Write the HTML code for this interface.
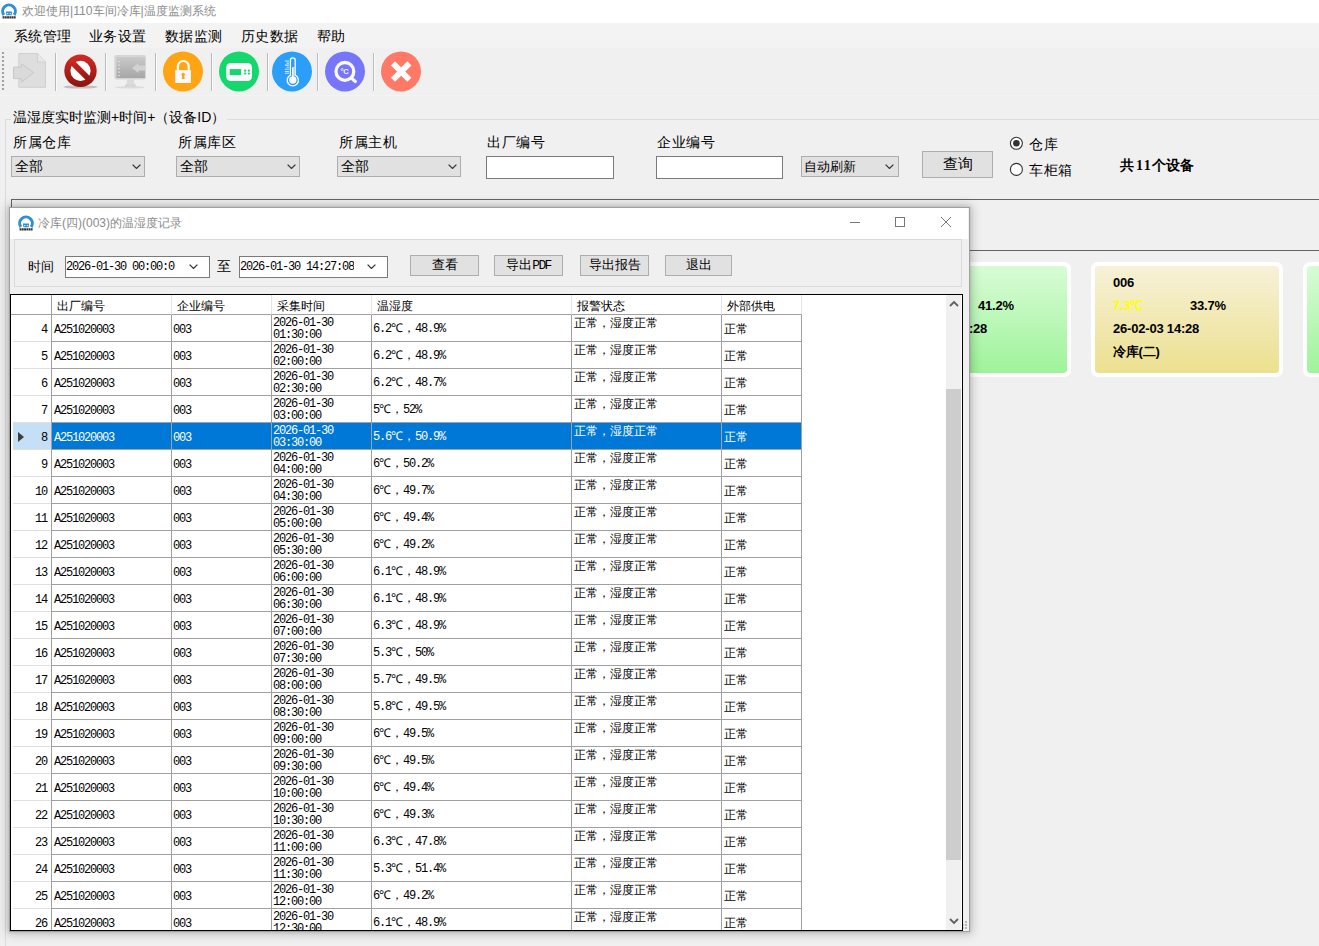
<!DOCTYPE html>
<html><head><meta charset="utf-8">
<style>
*{box-sizing:border-box;margin:0;padding:0}
html,body{width:1319px;height:946px;overflow:hidden;background:#f0f0f0;font-family:"Liberation Sans",sans-serif;color:#000}
.a{position:absolute}
#titlebar{left:0;top:0;width:1319px;height:23px;background:#fff}
#title{left:22px;top:4px;font-size:12.2px;line-height:15px;color:#8c8c8c;white-space:nowrap}
#menubar{left:0;top:23px;width:1319px;height:25px;background:#f3f3f3}
.menu{top:27px;font-size:14px;line-height:18px;letter-spacing:0.3px;white-space:nowrap}
#toolbar{left:0;top:50px;width:1319px;height:46px;background:#f0f0f0}
.sep{top:53px;width:1px;height:38px;background:#bababa;box-shadow:1px 0 0 #fbfbfb}
.grip{left:2px;top:52px;width:2px;height:40px;background:repeating-linear-gradient(#a0a0a0 0 2px,transparent 2px 4px)}
.lbl{font-size:14px;line-height:18px;letter-spacing:0.5px;white-space:nowrap}
.combo{height:21px;background:#e1e1e1;border:1px solid #adadad}
.combo .t{position:absolute;left:3px;top:2px;font-size:13.5px;line-height:16px;white-space:nowrap}
.chev{position:absolute;top:7px;width:9px;height:5px}
.tbox{height:23px;background:#fff;border:1px solid #7a7a7a}
.btn{background:#e1e1e1;border:1px solid #adadad;font-size:14px;text-align:center;white-space:nowrap}
.m{font-family:"Liberation Mono",monospace;font-size:12px;letter-spacing:-1.2px}
/* dialog */
#dlg{left:9px;top:207px;width:961px;height:725px;background:#f0f0f0;border:1px solid #a0a0a0;box-shadow:0 0 10px 2px rgba(0,0,0,.2),0 0 3px 1px rgba(0,0,0,.1)}
#dtitle{left:0;top:0;width:958px;height:31px;background:#fff}
#grid{left:0px;top:86px;width:953px;height:637px;background:#fff;border:1px solid #000;overflow:hidden}
.row{position:absolute;left:0;width:790px;height:27px}
.row>div{position:absolute;top:0;height:27px;white-space:nowrap}
.rn{left:2px;width:38px;padding-right:4px;text-align:right;line-height:31px;border-bottom:1px solid #e0e0e0}
.c1,.c2,.c3,.c4,.c5,.c6{border-right:1px solid #a0a0a0;border-bottom:1px solid #a0a0a0}
.c1{left:40px;width:121px;padding-left:2px;line-height:31px;border-left:1px solid #a0a0a0}
.c2{left:161px;width:100px;padding-left:1px;line-height:31px}
.c3{left:261px;width:100px;padding-left:2px}
.c3 .l1{position:absolute;left:1px;top:3px;line-height:11px}
.c3 .l2{position:absolute;left:1px;top:15px;line-height:11px}
.c4{left:361px;width:200px;padding-left:1px;line-height:27px;font-size:12px}
.c5{left:561px;width:150px;padding-left:2px;font-size:12px;line-height:16px}
.c6{left:711px;width:80px;padding-left:2px;font-size:12px;line-height:27px;padding-top:1px}
.sel .c1,.sel .c2,.sel .c3,.sel .c4,.sel .c5,.sel .c6{background:#0078d7;color:#fff}
.sel .rn{background:#c4dff6}
.row>.arr{position:absolute;left:7px;top:9px;width:0;height:0;border-top:5px solid transparent;border-bottom:5px solid transparent;border-left:6px solid #3c3c3c;z-index:2}
.hdr{position:absolute;top:0;height:20px;font-size:12px;line-height:22px;white-space:nowrap;border-right:1px solid #e4e4e4;border-bottom:1px solid #a0a0a0}
.card{width:192px;height:115px;border-radius:7px;background:#fff}
.card .in{position:absolute;left:4px;top:4px;width:184px;height:107px;border-radius:4px}
.green .in{background:linear-gradient(#d8fcd6,#9ff39a)}
.yellow .in{background:linear-gradient(#f7f1d8,#ece08f)}
.card .tx{position:absolute;font-weight:bold;font-size:13px;line-height:15px;white-space:nowrap;letter-spacing:-0.2px}
</style></head><body>
<div id="titlebar" class="a"></div>
<svg width="0" height="0" style="position:absolute"><symbol id="logo" viewBox="0 0 18 19"><path d="M3.6 14.8 A6.7 6.7 0 1 1 14.4 14.8" fill="none" stroke="#2f8fd6" stroke-width="3.2"/><path d="M5.8 11 L12.2 11 L11.8 15 L6.2 15 Z" fill="#2f8fd6"/><circle cx="7.6" cy="13.3" r=".7" fill="#fff"/><circle cx="10.4" cy="13.3" r=".7" fill="#fff"/><path d="M2.2 16.2 h2 v2.3 h-2z M4.6 16.2 h2 v2.3 h-2z M7 16.2 h2 v2.3 h-2z M9.4 16.2 h2 v2.3 h-2z M11.8 16.2 h2 v2.3 h-2z M14.2 16.2 h1.8 v2.3 h-1.8z" fill="#3a2f2f"/></symbol></svg>
<svg class="a" style="left:0px;top:1px" width="18" height="18"><use href="#logo"/></svg>
<div id="title" class="a">欢迎使用|110车间冷库|温度监测系统</div>
<div id="menubar" class="a"></div>
<div class="a menu" style="left:14px">系统管理</div>
<div class="a menu" style="left:89px">业务设置</div>
<div class="a menu" style="left:165px">数据监测</div>
<div class="a menu" style="left:241px">历史数据</div>
<div class="a menu" style="left:317px">帮助</div>
<div class="a" style="left:0;top:95px;width:1319px;height:1px;background:#f3f3f3"></div>
<div class="a grip"></div>
<!-- toolbar icons -->
<svg class="a" style="left:12px;top:52px" width="36" height="38" viewBox="0 0 36 38">
 <path d="M6.8 1.5 H25.8 L33.5 10 V35.3 H6.8 Z" fill="#dedede" stroke="#d0d0d0"/>
 <path d="M25.5 1.5 V10 H33.5" fill="#e8e8e8" stroke="#d0d0d0"/>
 <path d="M1.5 15.1 H9.7 V11.9 L21.7 20.6 L9.7 30 V26.6 H1.5 Z" fill="#dadada" stroke="#c8c8c8"/>
</svg>
<div class="a sep" style="left:55px"></div>
<svg class="a" style="left:62px;top:52px" width="38" height="40" viewBox="0 0 38 40" style="filter:none">
 <defs><linearGradient id="rg" x1="0" y1="0" x2="0" y2="1"><stop offset="0" stop-color="#d42a22"/><stop offset="1" stop-color="#8a1410"/></linearGradient></defs>
 <ellipse cx="18.5" cy="35" rx="17" ry="1.6" fill="#999" opacity=".55"/>
 <circle cx="18.5" cy="18.8" r="16.2" fill="url(#rg)"/>
 <circle cx="18.5" cy="18.8" r="10.1" fill="#fff"/>
 <path d="M6.5 10.8 L10.5 6.8 L30.5 26.8 L26.5 30.8 Z" fill="url(#rg)"/>
</svg>
<div class="a sep" style="left:105px"></div>
<svg class="a" style="left:112px;top:53px" width="36" height="38" viewBox="0 0 36 38">
 <defs><linearGradient id="mg" x1="0" y1="0" x2="0" y2="1"><stop offset="0" stop-color="#cacaca"/><stop offset="1" stop-color="#a6a6a6"/></linearGradient></defs>
 <ellipse cx="18" cy="34.3" rx="15" ry="1.3" fill="#dcdcdc"/>
 <rect x="2.3" y="2.1" width="31.7" height="24.3" rx="2" fill="#d6d6d6"/>
 <rect x="4.5" y="4" width="28.5" height="21" fill="url(#mg)"/>
 <path d="M6.3 8 h1.4 v1.2 h-1.4z M6.3 11.5 h1.4 v1.2 h-1.4z M6.3 15 h1.4 v1.2 h-1.4z M6.3 18.5 h1.4 v1.2 h-1.4z M6.3 22 h1.4 v1.2 h-1.4z" fill="#eaeaea"/>
 <path d="M33 12.5 H26.5 V10 L20 15 L26.5 20 V17.5 H33 Z" fill="#d2d2d2"/>
 <rect x="15" y="26.5" width="7" height="4" fill="#dadada"/>
 <path d="M12.5 34 L14 30.5 H23 L24.5 34 Z" fill="#d6d6d6"/>
</svg>
<div class="a sep" style="left:155px"></div>
<svg class="a" style="left:162px;top:51px" width="42" height="42" viewBox="0 0 42 42">
 <circle cx="21" cy="20.5" r="20" fill="#ffa514"/>
 <path d="M15.9 19.5 V15.4 A5.4 5.4 0 0 1 26.7 15.4 V19.5" fill="none" stroke="#fff" stroke-width="2.2"/>
 <rect x="13.2" y="19.1" width="15.7" height="12.9" fill="#fcf8ff"/>
 <circle cx="21.2" cy="23.5" r="1.8" fill="#ffa514"/><path d="M20.3 24 h1.8 l0.6 4 h-3z" fill="#ffa514"/>
</svg>
<div class="a sep" style="left:211px"></div>
<svg class="a" style="left:219px;top:51px" width="42" height="42" viewBox="0 0 42 42">
 <circle cx="20" cy="20.4" r="20" fill="#14d86b"/>
 <rect x="7.2" y="11.9" width="25.8" height="18.1" rx="4.5" fill="#fcf8ff"/>
 <rect x="10.7" y="18.1" width="11.4" height="6" fill="#14d86b"/>
 <circle cx="26.1" cy="19.7" r="1.15" fill="#14d86b"/><circle cx="29.9" cy="19.7" r="1.15" fill="#14d86b"/>
 <circle cx="26.1" cy="22.6" r="1.15" fill="#14d86b"/><circle cx="29.9" cy="22.6" r="1.15" fill="#14d86b"/>
</svg>
<div class="a sep" style="left:267px"></div>
<svg class="a" style="left:272px;top:51px" width="42" height="42" viewBox="0 0 42 42">
 <circle cx="20" cy="20.4" r="20" fill="#2a9ef8"/>
 <path d="M18.4 24.2 V9.2 A2.4 2.4 0 0 1 23.2 9.2 V24.2 A5.6 5.6 0 1 1 18.4 24.2 Z" fill="none" stroke="#fff" stroke-width="1.3"/>
 <rect x="21.2" y="16" width="1.4" height="9" fill="#bfe0ff"/>
 <circle cx="20.8" cy="29" r="3.7" fill="#fcf8ff"/><rect x="20.1" y="16.3" width="1.3" height="12" fill="#fff"/>
 <path d="M12.9 10 H16.9 M14.6 12.1 H16.9 M12.9 14.1 H16.9 M14.6 16.2 H16.9 M12.9 18.2 H16.9 M12.9 20.5 H16.9 M12.9 22.2 H16.9" stroke="#d8ecff" stroke-width="1.1"/>
</svg>
<div class="a sep" style="left:317px"></div>
<svg class="a" style="left:325px;top:51px" width="42" height="42" viewBox="0 0 42 42">
 <circle cx="20" cy="20.4" r="20" fill="#7676fa"/>
 <circle cx="19.9" cy="20.4" r="8.9" fill="none" stroke="#fcf8ff" stroke-width="3.3"/>
 <path d="M26.3 27 L30.3 30.4" stroke="#fcf8ff" stroke-width="3.3" stroke-linecap="round"/>
 <text x="19.6" y="23.3" font-size="7.5" font-family="Liberation Sans" fill="#fcf8ff" text-anchor="middle" font-weight="bold">°C</text>
</svg>
<div class="a sep" style="left:373px"></div>
<svg class="a" style="left:381px;top:51px" width="42" height="42" viewBox="0 0 42 42">
 <circle cx="20" cy="20.4" r="20" fill="#ff7966"/>
 <path d="M12 12.4 L28.4 28.8 M28.4 12.4 L12 28.8" stroke="#fff" stroke-width="5.8"/>
</svg>

<!-- group box -->
<div class="a" style="left:5px;top:119px;width:1314px;height:827px;border-left:1px solid #dcdcdc;border-top:1px solid #dcdcdc"></div>
<div class="a lbl" style="left:11px;top:108px;padding:0 2px;background:#f0f0f0;letter-spacing:0">温湿度实时监测+时间+（设备ID）</div>
<div class="a lbl" style="left:13px;top:133px">所属仓库</div>
<div class="a lbl" style="left:178px;top:133px">所属库区</div>
<div class="a lbl" style="left:339px;top:133px">所属主机</div>
<div class="a lbl" style="left:487px;top:133px">出厂编号</div>
<div class="a lbl" style="left:657px;top:133px">企业编号</div>
<div class="a combo" style="left:11px;top:156px;width:134px"><div class="t">全部</div><svg class="chev" style="left:119.5px" viewBox="0 0 9 5"><path d="M0.6 0.6 L4.5 4.4 L8.4 0.6" fill="none" stroke="#333" stroke-width="1.3"/></svg></div>
<div class="a combo" style="left:176px;top:156px;width:124px"><div class="t">全部</div><svg class="chev" style="left:109.5px" viewBox="0 0 9 5"><path d="M0.6 0.6 L4.5 4.4 L8.4 0.6" fill="none" stroke="#333" stroke-width="1.3"/></svg></div>
<div class="a combo" style="left:337px;top:156px;width:124px"><div class="t">全部</div><svg class="chev" style="left:109.5px" viewBox="0 0 9 5"><path d="M0.6 0.6 L4.5 4.4 L8.4 0.6" fill="none" stroke="#333" stroke-width="1.3"/></svg></div>
<div class="a tbox" style="left:486px;top:156px;width:128px"></div>
<div class="a tbox" style="left:656px;top:156px;width:127px"></div>
<div class="a combo" style="left:801px;top:156px;width:98px"><div class="t" style="left:2px;font-size:13.2px">自动刷新</div><svg class="chev" style="left:83px" viewBox="0 0 9 5"><path d="M0.6 0.6 L4.5 4.4 L8.4 0.6" fill="none" stroke="#333" stroke-width="1.3"/></svg></div>
<div class="a btn" style="left:922px;top:151px;width:71px;height:27px;line-height:24px;font-size:15px">查询</div>
<svg class="a" style="left:1008px;top:135px" width="16" height="44" viewBox="0 0 16 44">
 <circle cx="8.4" cy="8.3" r="6" fill="#fff" stroke="#333" stroke-width="1.1"/>
 <circle cx="8.4" cy="8.3" r="3.3" fill="#333"/>
 <circle cx="8.4" cy="34.4" r="6" fill="#fff" stroke="#333" stroke-width="1.1"/>
</svg>
<div class="a lbl" style="left:1029px;top:135px">仓库</div>
<div class="a lbl" style="left:1029px;top:161px">车柜箱</div>
<div class="a" style="left:1120px;top:157px;font-size:13.5px;font-weight:bold;line-height:17px;white-space:nowrap">共<span style="font-family:'Liberation Serif';font-size:14px;letter-spacing:1.5px;padding-left:2px">11</span>个设备</div>

<!-- panel lines -->
<div class="a" style="left:11px;top:199px;width:1308px;height:732px;border-left:1px solid #646464;border-top:1px solid #646464"></div>
<div class="a" style="left:11px;top:250px;width:1308px;height:1px;background:#646464"></div>

<!-- cards -->
<div class="a card green" style="left:879px;top:262px"><div class="in"></div>
 <div class="tx" style="left:99px;top:36px">41.2%</div>
 <div class="tx" style="left:22px;top:59px">26-02-03 14:28</div>
</div>
<div class="a card yellow" style="left:1091px;top:262px"><div class="in"></div>
 <div class="tx" style="left:22px;top:13px">006</div>
 <div class="tx" style="left:22px;top:36px;color:#ffff00">7.3℃</div>
 <div class="tx" style="left:99px;top:36px">33.7%</div>
 <div class="tx" style="left:22px;top:59px">26-02-03 14:28</div>
 <div class="tx" style="left:22px;top:82px">冷库(二)</div>
</div>
<div class="a card green" style="left:1303px;top:262px"><div class="in"></div></div>

<!-- dialog -->
<div id="dlg" class="a">
 <div id="dtitle" class="a"></div>
 <svg class="a" style="left:7px;top:5px" width="18" height="18"><use href="#logo"/></svg>
 <div class="a" style="left:28px;top:8px;font-size:12px;line-height:15px;color:#8c8c8c;white-space:nowrap">冷库(四)(003)的温湿度记录</div>
 <svg class="a" style="left:839px;top:8px" width="110" height="14" viewBox="0 0 110 14">
  <path d="M1 6.5 H11" stroke="#777" stroke-width="1"/>
  <rect x="46.5" y="1.5" width="9" height="9" fill="none" stroke="#777" stroke-width="1"/>
  <path d="M92 1 L102 11 M102 1 L92 11" stroke="#777" stroke-width="1"/>
 </svg>
 <div class="a" style="left:4px;top:31px;width:948px;height:48px;border:1px solid #dadada;background:#f0f0f0"></div>
 <div class="a lbl" style="left:17.5px;top:50px;letter-spacing:0;font-size:13px">时间</div>
 <div class="a tbox" style="left:55px;top:48px;width:145px;height:22px"><div class="a m" style="left:0px;top:3px;font-size:12px;letter-spacing:-1.2px;line-height:14px">2026-01-30 00:00:0</div><svg class="chev" style="left:122.5px;top:7px" viewBox="0 0 9 5"><path d="M0.6 0.6 L4.5 4.4 L8.4 0.6" fill="none" stroke="#333" stroke-width="1.3"/></svg></div>
 <div class="a lbl" style="left:207px;top:49px">至</div>
 <div class="a tbox" style="left:229px;top:48px;width:149px;height:22px"><div class="a m" style="left:0px;top:3px;width:114px;overflow:hidden;white-space:nowrap;font-size:12px;letter-spacing:-1.2px;line-height:14px">2026-01-30 14:27:08</div><svg class="chev" style="left:127px;top:7px" viewBox="0 0 9 5"><path d="M0.6 0.6 L4.5 4.4 L8.4 0.6" fill="none" stroke="#333" stroke-width="1.3"/></svg></div>
 <div class="a btn" style="left:400px;top:47px;width:69px;height:21px;line-height:18px;font-size:13px">查看</div>
 <div class="a btn" style="left:484px;top:47px;width:69px;height:21px;line-height:18px;font-size:13px">导出<span style="font-family:'Liberation Mono';font-size:13px;letter-spacing:-1.6px">PDF</span></div>
 <div class="a btn" style="left:570px;top:47px;width:69px;height:21px;line-height:18px;font-size:13px">导出报告</div>
 <div class="a btn" style="left:655px;top:47px;width:67px;height:21px;line-height:18px;font-size:13px">退出</div>
 <div class="a" style="left:953px;top:86px;width:6px;height:637px;background:#f0f0f0"></div>
 <div class="a" style="left:955px;top:713px;width:2px;height:2px;background:#b8b8b8"></div>
 <div class="a" style="left:955px;top:716px;width:2px;height:2px;background:#b8b8b8"></div>
 <div class="a" style="left:955px;top:719px;width:2px;height:2px;background:#b8b8b8"></div>
 <div class="a" style="left:953px;top:716px;width:1px;height:2px;background:#c8c8c8"></div>
 <div class="a" style="left:953px;top:719px;width:1px;height:2px;background:#c8c8c8"></div>
 <div id="grid" class="a">
  <div class="hdr" style="left:0;width:40px;border-right:0"></div>
  <div class="hdr" style="left:40px;width:121px;padding-left:5px;border-left:1px solid #a0a0a0">出厂编号</div>
  <div class="hdr" style="left:161px;width:100px;padding-left:5px">企业编号</div>
  <div class="hdr" style="left:261px;width:100px;padding-left:5px">采集时间</div>
  <div class="hdr" style="left:361px;width:200px;padding-left:5px">温湿度</div>
  <div class="hdr" style="left:561px;width:150px;padding-left:5px">报警状态</div>
  <div class="hdr" style="left:711px;width:80px;padding-left:5px">外部供电</div>
<div class="row" style="top:20px"><div class="rn m">4</div><div class="c1 m">A251020003</div><div class="c2 m">003</div><div class="c3 m"><div class="l1">2026-01-30</div><div class="l2">01:30:00</div></div><div class="c4"><span class="m">6.2</span>℃，<span class="m">48.9%</span></div><div class="c5">正常，湿度正常</div><div class="c6">正常</div></div>
<div class="row" style="top:47px"><div class="rn m">5</div><div class="c1 m">A251020003</div><div class="c2 m">003</div><div class="c3 m"><div class="l1">2026-01-30</div><div class="l2">02:00:00</div></div><div class="c4"><span class="m">6.2</span>℃，<span class="m">48.9%</span></div><div class="c5">正常，湿度正常</div><div class="c6">正常</div></div>
<div class="row" style="top:74px"><div class="rn m">6</div><div class="c1 m">A251020003</div><div class="c2 m">003</div><div class="c3 m"><div class="l1">2026-01-30</div><div class="l2">02:30:00</div></div><div class="c4"><span class="m">6.2</span>℃，<span class="m">48.7%</span></div><div class="c5">正常，湿度正常</div><div class="c6">正常</div></div>
<div class="row" style="top:101px"><div class="rn m">7</div><div class="c1 m">A251020003</div><div class="c2 m">003</div><div class="c3 m"><div class="l1">2026-01-30</div><div class="l2">03:00:00</div></div><div class="c4"><span class="m">5</span>℃，<span class="m">52%</span></div><div class="c5">正常，湿度正常</div><div class="c6">正常</div></div>
<div class="row sel" style="top:128px"><div class="arr"></div><div class="rn m">8</div><div class="c1 m">A251020003</div><div class="c2 m">003</div><div class="c3 m"><div class="l1">2026-01-30</div><div class="l2">03:30:00</div></div><div class="c4"><span class="m">5.6</span>℃，<span class="m">50.9%</span></div><div class="c5">正常，湿度正常</div><div class="c6">正常</div></div>
<div class="row" style="top:155px"><div class="rn m">9</div><div class="c1 m">A251020003</div><div class="c2 m">003</div><div class="c3 m"><div class="l1">2026-01-30</div><div class="l2">04:00:00</div></div><div class="c4"><span class="m">6</span>℃，<span class="m">50.2%</span></div><div class="c5">正常，湿度正常</div><div class="c6">正常</div></div>
<div class="row" style="top:182px"><div class="rn m">10</div><div class="c1 m">A251020003</div><div class="c2 m">003</div><div class="c3 m"><div class="l1">2026-01-30</div><div class="l2">04:30:00</div></div><div class="c4"><span class="m">6</span>℃，<span class="m">49.7%</span></div><div class="c5">正常，湿度正常</div><div class="c6">正常</div></div>
<div class="row" style="top:209px"><div class="rn m">11</div><div class="c1 m">A251020003</div><div class="c2 m">003</div><div class="c3 m"><div class="l1">2026-01-30</div><div class="l2">05:00:00</div></div><div class="c4"><span class="m">6</span>℃，<span class="m">49.4%</span></div><div class="c5">正常，湿度正常</div><div class="c6">正常</div></div>
<div class="row" style="top:236px"><div class="rn m">12</div><div class="c1 m">A251020003</div><div class="c2 m">003</div><div class="c3 m"><div class="l1">2026-01-30</div><div class="l2">05:30:00</div></div><div class="c4"><span class="m">6</span>℃，<span class="m">49.2%</span></div><div class="c5">正常，湿度正常</div><div class="c6">正常</div></div>
<div class="row" style="top:263px"><div class="rn m">13</div><div class="c1 m">A251020003</div><div class="c2 m">003</div><div class="c3 m"><div class="l1">2026-01-30</div><div class="l2">06:00:00</div></div><div class="c4"><span class="m">6.1</span>℃，<span class="m">48.9%</span></div><div class="c5">正常，湿度正常</div><div class="c6">正常</div></div>
<div class="row" style="top:290px"><div class="rn m">14</div><div class="c1 m">A251020003</div><div class="c2 m">003</div><div class="c3 m"><div class="l1">2026-01-30</div><div class="l2">06:30:00</div></div><div class="c4"><span class="m">6.1</span>℃，<span class="m">48.9%</span></div><div class="c5">正常，湿度正常</div><div class="c6">正常</div></div>
<div class="row" style="top:317px"><div class="rn m">15</div><div class="c1 m">A251020003</div><div class="c2 m">003</div><div class="c3 m"><div class="l1">2026-01-30</div><div class="l2">07:00:00</div></div><div class="c4"><span class="m">6.3</span>℃，<span class="m">48.9%</span></div><div class="c5">正常，湿度正常</div><div class="c6">正常</div></div>
<div class="row" style="top:344px"><div class="rn m">16</div><div class="c1 m">A251020003</div><div class="c2 m">003</div><div class="c3 m"><div class="l1">2026-01-30</div><div class="l2">07:30:00</div></div><div class="c4"><span class="m">5.3</span>℃，<span class="m">50%</span></div><div class="c5">正常，湿度正常</div><div class="c6">正常</div></div>
<div class="row" style="top:371px"><div class="rn m">17</div><div class="c1 m">A251020003</div><div class="c2 m">003</div><div class="c3 m"><div class="l1">2026-01-30</div><div class="l2">08:00:00</div></div><div class="c4"><span class="m">5.7</span>℃，<span class="m">49.5%</span></div><div class="c5">正常，湿度正常</div><div class="c6">正常</div></div>
<div class="row" style="top:398px"><div class="rn m">18</div><div class="c1 m">A251020003</div><div class="c2 m">003</div><div class="c3 m"><div class="l1">2026-01-30</div><div class="l2">08:30:00</div></div><div class="c4"><span class="m">5.8</span>℃，<span class="m">49.5%</span></div><div class="c5">正常，湿度正常</div><div class="c6">正常</div></div>
<div class="row" style="top:425px"><div class="rn m">19</div><div class="c1 m">A251020003</div><div class="c2 m">003</div><div class="c3 m"><div class="l1">2026-01-30</div><div class="l2">09:00:00</div></div><div class="c4"><span class="m">6</span>℃，<span class="m">49.5%</span></div><div class="c5">正常，湿度正常</div><div class="c6">正常</div></div>
<div class="row" style="top:452px"><div class="rn m">20</div><div class="c1 m">A251020003</div><div class="c2 m">003</div><div class="c3 m"><div class="l1">2026-01-30</div><div class="l2">09:30:00</div></div><div class="c4"><span class="m">6</span>℃，<span class="m">49.5%</span></div><div class="c5">正常，湿度正常</div><div class="c6">正常</div></div>
<div class="row" style="top:479px"><div class="rn m">21</div><div class="c1 m">A251020003</div><div class="c2 m">003</div><div class="c3 m"><div class="l1">2026-01-30</div><div class="l2">10:00:00</div></div><div class="c4"><span class="m">6</span>℃，<span class="m">49.4%</span></div><div class="c5">正常，湿度正常</div><div class="c6">正常</div></div>
<div class="row" style="top:506px"><div class="rn m">22</div><div class="c1 m">A251020003</div><div class="c2 m">003</div><div class="c3 m"><div class="l1">2026-01-30</div><div class="l2">10:30:00</div></div><div class="c4"><span class="m">6</span>℃，<span class="m">49.3%</span></div><div class="c5">正常，湿度正常</div><div class="c6">正常</div></div>
<div class="row" style="top:533px"><div class="rn m">23</div><div class="c1 m">A251020003</div><div class="c2 m">003</div><div class="c3 m"><div class="l1">2026-01-30</div><div class="l2">11:00:00</div></div><div class="c4"><span class="m">6.3</span>℃，<span class="m">47.8%</span></div><div class="c5">正常，湿度正常</div><div class="c6">正常</div></div>
<div class="row" style="top:560px"><div class="rn m">24</div><div class="c1 m">A251020003</div><div class="c2 m">003</div><div class="c3 m"><div class="l1">2026-01-30</div><div class="l2">11:30:00</div></div><div class="c4"><span class="m">5.3</span>℃，<span class="m">51.4%</span></div><div class="c5">正常，湿度正常</div><div class="c6">正常</div></div>
<div class="row" style="top:587px"><div class="rn m">25</div><div class="c1 m">A251020003</div><div class="c2 m">003</div><div class="c3 m"><div class="l1">2026-01-30</div><div class="l2">12:00:00</div></div><div class="c4"><span class="m">6</span>℃，<span class="m">49.2%</span></div><div class="c5">正常，湿度正常</div><div class="c6">正常</div></div>
<div class="row" style="top:614px"><div class="rn m">26</div><div class="c1 m">A251020003</div><div class="c2 m">003</div><div class="c3 m"><div class="l1">2026-01-30</div><div class="l2">12:30:00</div></div><div class="c4"><span class="m">6.1</span>℃，<span class="m">48.9%</span></div><div class="c5">正常，湿度正常</div><div class="c6">正常</div></div>
  <div class="a" style="left:935px;top:0;width:15px;height:635px;background:#f0f0f0"></div>
  <div class="a" style="left:935px;top:94px;width:15px;height:471px;background:#cdcdcd"></div>
  <svg class="a" style="left:938px;top:5px" width="10" height="8" viewBox="0 0 10 8"><path d="M1 6 L5 2 L9 6" fill="none" stroke="#606060" stroke-width="1.8"/></svg>
  <svg class="a" style="left:938px;top:622px" width="10" height="8" viewBox="0 0 10 8"><path d="M1 2 L5 6 L9 2" fill="none" stroke="#606060" stroke-width="1.8"/></svg>
 </div>
</div>
</body></html>
